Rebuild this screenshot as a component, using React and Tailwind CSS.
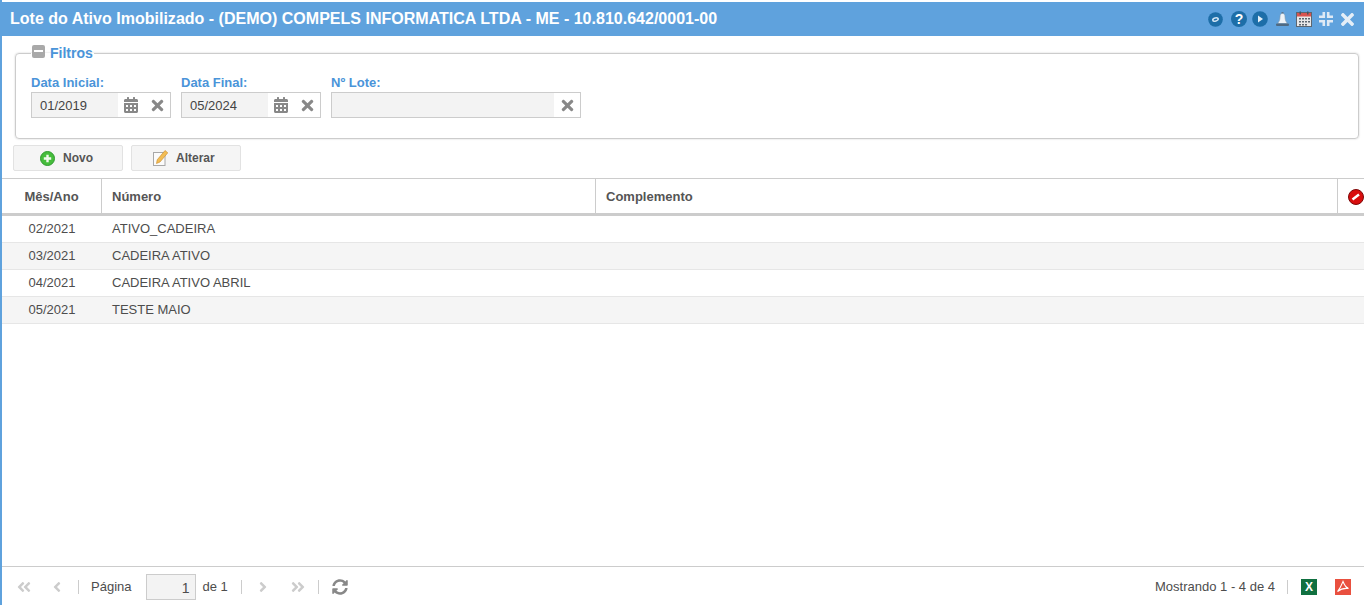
import { FaAngleDoubleLeft, FaAngleDoubleRight, FaAngleLeft, FaAngleRight, FaCalendarAlt, FaTimes, FaSyncAlt } from 'react-icons/fa';

const rows = [
  { mes: '02/2021', numero: 'ATIVO_CADEIRA' },
  { mes: '03/2021', numero: 'CADEIRA ATIVO' },
  { mes: '04/2021', numero: 'CADEIRA ATIVO ABRIL' },
  { mes: '05/2021', numero: 'TESTE MAIO' },
];

function DateField({ label, value, width }) {
  return (
    <div className={width}>
      <div className="h-[18px] text-[13px] font-bold leading-[18px] text-[#4a94d9]">{label}</div>
      <div className="flex h-[26px] border border-[#cccccc] bg-white">
        <div className="w-[86px] bg-[#f3f3f3] pl-[8px] text-[13px] leading-[25px] text-[#444444]">{value}</div>
        <div className="flex w-[26px] items-center justify-center text-[#888888]">
          <FaCalendarAlt size={16} />
        </div>
        <div className="flex flex-1 items-center justify-center text-[#888888]">
          <FaTimes size={17} />
        </div>
      </div>
    </div>
  );
}

function HeaderIcons() {
  return (
    <div className="flex items-center">
      <svg width="15" height="15" viewBox="0 0 16 16" className="mr-[8px]">
        <circle cx="8" cy="8" r="7.8" fill="#1d6ea8" />
        <ellipse cx="8" cy="8" rx="3.8" ry="2.4" fill="#cfe3f2" transform="rotate(-15 8 8)" />
        <ellipse cx="8" cy="8" rx="2" ry="0.9" fill="#1d6ea8" transform="rotate(-15 8 8)" />
      </svg>
      <svg width="16" height="16" viewBox="0 0 16 16" className="mr-[5px]">
        <circle cx="8" cy="8" r="8" fill="#1d6ea8" />
        <text x="8" y="13" textAnchor="middle" fontSize="14" fontWeight="700" fill="#fff" fontFamily="Liberation Sans">?</text>
      </svg>
      <svg width="16" height="16" viewBox="0 0 16 16" className="mr-[7px]">
        <circle cx="8" cy="8" r="7.8" fill="#1d6ea8" />
        <path d="M6 4.6 L11 8 L6 11.4 Z" fill="#e6f0f8" />
      </svg>
      <svg width="15" height="15" viewBox="0 0 15 15" className="mr-[6px]">
        <rect x="6.5" y="0" width="2" height="2" fill="#5a7690" />
        <path d="M7.5 1.5 C9.5 1.5 10 3 10 5 C10 8 11 10 12.5 11.5 L2.5 11.5 C4 10 5 8 5 5 C5 3 5.5 1.5 7.5 1.5 Z" fill="#eef3f7" stroke="#7f99b0" strokeWidth="0.6" />
        <rect x="1" y="11.5" width="13" height="2.5" rx="1" fill="#4f6a82" />
      </svg>
      <svg width="16" height="16" viewBox="0 0 16 16" className="mr-[6px]">
        <rect x="0.5" y="1.5" width="15" height="14" fill="#e8e8e8" stroke="#5c6670" />
        <rect x="1" y="2" width="14" height="3.5" fill="#d9534f" />
        <path d="M3.5 0.5h1.5v3H3.5zM11 0.5h1.5v3H11z" fill="#47525c" />
        <path d="M3 7h2v1.5H3zM6 7h2v1.5H6zM9 7h2v1.5H9zM12 7h2v1.5h-2zM3 10h2v1.5H3zM6 10h2v1.5H6zM9 10h2v1.5H9zM12 10h2v1.5h-2zM3 13h2v1.5H3zM6 13h2v1.5H6zM9 13h2v1.5H9z" fill="#5c6670" />
      </svg>
      <svg width="16" height="16" viewBox="0 0 16 16" className="mr-[7px]" fill="#dfeaf5">
        <path d="M4.5 1h2.6v6H1V4.4h3.5zM8.9 1h2.6v3.4H15V7H8.9zM1 9h6.1v6H4.5v-3.4H1zM8.9 9H15v2.6h-3.5V15H8.9z" />
      </svg>
      <FaTimes size={19} className="-mx-[3px] text-[#e4eef7]" />
    </div>
  );
}

export default function App() {
  return (
    <div className="flex h-[605px] flex-col overflow-hidden border-l-2 border-[#5fa2dd] bg-white font-['Liberation_Sans',Arial,sans-serif]">
      <div className="mt-[2px] -ml-[2px] flex h-[34px] items-center justify-between bg-[#5fa2dd] pl-[10px] pr-[10px]">
        <h1 className="text-[16px] font-bold tracking-[0.012px] text-white">
          Lote do Ativo Imobilizado - (DEMO) COMPELS INFORMATICA LTDA - ME - 10.810.642/0001-00
        </h1>
        <HeaderIcons />
      </div>

      <fieldset className="ml-[13px] mr-[5px] mt-[9px] h-[94px] rounded-[4px] border border-[#cccccc] pl-[15px] shadow-[0_0_2px_rgba(0,0,0,0.2)]">
        <legend className="flex items-center px-[1px] text-[14px] font-bold leading-[16px] text-[#4a94d9]">
          <span className="relative -top-[2px] mr-[5px] flex h-[13px] w-[13px] items-center justify-center rounded-[2px] bg-[#a9a9a9]">
            <span className="h-[2px] w-[9px] bg-white" />
          </span>
          Filtros
        </legend>
        <div className="mt-[13px] flex gap-[10px]">
          <DateField label="Data Inicial:" value="01/2019" width="w-[140px]" />
          <DateField label="Data Final:" value="05/2024" width="w-[140px]" />
          <div className="w-[250px]">
            <div className="h-[18px] text-[13px] font-bold leading-[18px] text-[#4a94d9]">Nº Lote:</div>
            <div className="flex h-[26px] border border-[#cccccc] bg-white">
              <div className="w-[222px] bg-[#f3f3f3]" />
              <div className="flex flex-1 items-center justify-center text-[#888888]">
                <FaTimes size={17} />
              </div>
            </div>
          </div>
        </div>
      </fieldset>

      <div className="ml-[11px] mt-[6px] flex gap-[8px]">
        <button className="flex h-[26px] w-[110px] items-center rounded-[2px] border border-[#e2e2e2] bg-[#f5f5f5] pl-[26px] text-[12px] font-bold text-[#555555]">
          <svg width="15" height="15" viewBox="0 0 15 15" className="mr-[8px]">
            <circle cx="7.5" cy="7.5" r="7" fill="#46bd3c" stroke="#2f9a2f" />
            <path d="M6.3 3.8h2.4v2.5h2.5v2.4H8.7v2.5H6.3V8.7H3.8V6.3h2.5z" fill="#f2fbef" />
          </svg>
          Novo
        </button>
        <button className="flex h-[26px] w-[110px] items-center rounded-[2px] border border-[#e2e2e2] bg-[#f5f5f5] pl-[21px] text-[12px] font-bold text-[#555555]">
          <svg width="15" height="16" viewBox="0 0 15 16" className="mr-[8px]">
            <rect x="0.5" y="2.5" width="11.5" height="13" fill="#fbfbfb" stroke="#a8a8a8" />
            <path d="M12 0.5 L14.8 2.8 L7 12 L3.5 13.5 L4.2 9.8 Z" fill="#f2bd55" stroke="#c98a28" strokeWidth="0.6" />
          </svg>
          Alterar
        </button>
      </div>

      <div className="mt-[7px] flex h-[38px] border-t border-b-[3px] border-t-[#cccccc] border-b-[#cccccc] text-[13px] font-bold text-[#555555]">
        <div className="flex w-[100px] items-center justify-center border-r border-[#cccccc] pt-[1px]">Mês/Ano</div>
        <div className="flex w-[494px] items-center border-r border-[#cccccc] pl-[10px] pt-[1px]">Número</div>
        <div className="flex flex-1 items-center border-r border-[#cccccc] pl-[10px] pt-[1px]">Complemento</div>
        <div className="flex w-[26px] items-center pl-[10px] pt-[1px]">
          <svg width="16" height="16" viewBox="0 0 16 16" className="shrink-0">
            <circle cx="8" cy="8" r="7.5" fill="#d80d0d" stroke="#7d0707" />
            <path d="M4.5 10.5 L11 5.5" stroke="#fff" strokeWidth="2.4" />
          </svg>
        </div>
      </div>

      <div className="flex-1">
        {rows.map((row, i) => (
          <div
            key={row.mes}
            className={`flex h-[27px] items-center border-b border-[#e6e6e6] text-[13px] text-[#4d4d4d] ${i % 2 === 1 ? 'bg-[#f5f5f5]' : 'bg-white'}`}
          >
            <div className="w-[100px] text-center">{row.mes}</div>
            <div className="pl-[10px]">{row.numero}</div>
          </div>
        ))}
      </div>

      <div className="flex h-[39px] items-center border-t border-[#cccccc] pt-[1px] text-[13px] text-[#4d4d4d]">
        <FaAngleDoubleLeft size={16} className="ml-[14px] text-[#cccccc]" />
        <FaAngleLeft size={16} className="ml-[17px] text-[#cccccc]" />
        <div className="ml-[13px] h-[14px] w-px bg-[#cccccc]" />
        <span className="ml-[12px]">Página</span>
        <div className="ml-[15px] h-[26px] w-[50px] border border-[#cccccc] bg-[#f3f3f3] pr-[6px] text-right text-[14px] leading-[26px]">1</div>
        <span className="ml-[6px]">de 1</span>
        <div className="ml-[13px] h-[14px] w-px bg-[#cccccc]" />
        <FaAngleRight size={16} className="ml-[13px] text-[#cccccc]" />
        <FaAngleDoubleRight size={16} className="ml-[19px] text-[#cccccc]" />
        <div className="ml-[12px] h-[14px] w-px bg-[#cccccc]" />
        <FaSyncAlt size={16} className="ml-[13px] text-[#888888]" />
        <span className="ml-auto">Mostrando 1 - 4 de 4</span>
        <div className="ml-[12px] h-[14px] w-px bg-[#cccccc]" />
        <div className="ml-[13px] flex h-[16px] w-[16px] items-center justify-center bg-[#107040] text-[12px] font-bold leading-none text-white">X</div>
        <div className="ml-[18px] mr-[13px] flex h-[16px] w-[16px] items-center justify-center bg-[#e9503f]">
          <svg width="14" height="14" viewBox="0 0 14 14" fill="none" stroke="#fff" strokeWidth="1.1">
            <path d="M7 1.5 C6 4 4.5 8 1.5 11.5 C4 9.5 9 8 12.5 8.5 C10 7.5 8 4 7 1.5 Z" />
          </svg>
        </div>
      </div>
    </div>
  );
}
